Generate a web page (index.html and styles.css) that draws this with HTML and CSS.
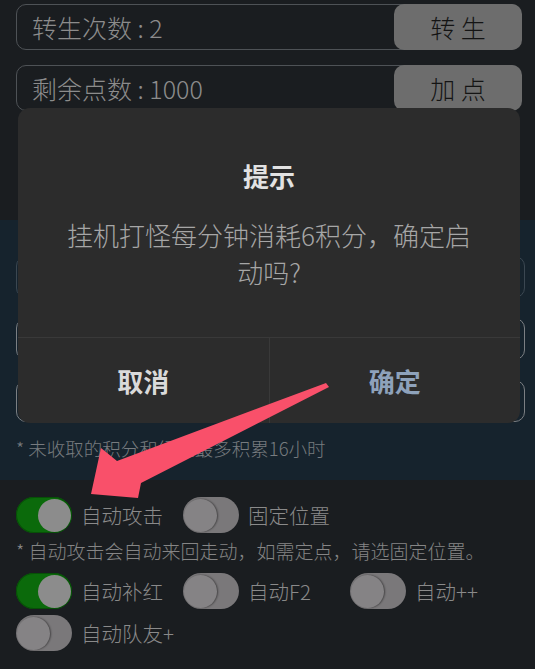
FILE: index.html
```html
<!DOCTYPE html>
<html lang="zh-CN">
<head>
  <meta charset="UTF-8">
  <meta name="viewport" content="width=device-width, initial-scale=1.0">
  <title>挂机设置</title>
  <link rel="stylesheet" href="styles.css">
</head>
<body>

  <!-- 转生 / 加点 -->
  <div class="top">
    <div class="field">
      <span class="field-text">转生次数 : 2</span>
      <button class="field-btn">转 生</button>
    </div>
    <div class="field">
      <span class="field-text">剩余点数 : 1000</span>
      <button class="field-btn">加 点</button>
    </div>
  </div>

  <div class="stats"></div>

  <!-- 积分区 -->
  <div class="band">
    <div class="band-row"></div>
    <div class="band-row light"></div>
    <div class="band-row light"></div>
    <p class="foot">* 未收取的积分和经验最多积累16小时</p>
  </div>

  <!-- 开关 -->
  <div class="opts">
    <div class="switch-row">
      <label class="opt"><span class="switch on"></span>自动攻击</label>
      <label class="opt"><span class="switch"></span>固定位置</label>
    </div>
    <p class="note">* 自动攻击会自动来回走动，如需定点，请选固定位置。</p>
    <div class="switch-row">
      <label class="opt"><span class="switch on"></span>自动补红</label>
      <label class="opt"><span class="switch"></span>自动F2</label>
      <label class="opt"><span class="switch"></span>自动++</label>
      <label class="opt"><span class="switch"></span>自动队友+</label>
    </div>
  </div>

  <!-- 提示框 -->
  <div class="dialog">
    <div class="dialog-title">提示</div>
    <div class="dialog-msg">挂机打怪每分钟消耗6积分，确定启动吗?</div>
    <div class="dialog-foot">
      <button class="dialog-btn">取消</button>
      <button class="dialog-btn ok">确定</button>
    </div>
  </div>

  <!-- 标注箭头 -->
  <svg class="arrow" width="535" height="669" viewBox="0 0 535 669">
    <polygon points="91,494 101,448 117,461 326,383 329,387 141,483 138,498" fill="#f9506a"/>
  </svg>

</body>
</html>
```

FILE: styles.css
```css
* { box-sizing: border-box; margin: 0; padding: 0; }

body {
  font-family: "Noto Sans CJK SC", "Noto Sans", sans-serif;
  font-weight: 300;
  background: #1a1d20;
  color: #8a8a8a;
  width: 535px;
  height: 669px;
  overflow: hidden;
  position: relative;
}

button { font-family: inherit; font-weight: inherit; border: none; background: none; }

/* — TOP FIELDS ————————————— */
.top {
  padding: 4px 14px 0 16px;
  display: flex;
  flex-direction: column;
  gap: 15px;
}
.field {
  height: 46px;
  border: 1.5px solid #4e5256;
  border-radius: 10px;
  display: flex;
  align-items: center;
  justify-content: space-between;
}
.field-text {
  font-size: 25px;
  padding-left: 15px;
  color: #8c8c8c;
}
.field-btn {
  align-self: stretch;
  width: 128px;
  margin: -1px -2px -1px 0;
  background: #6d6d6d;
  border-radius: 10px;
  font-size: 25px;
  color: #141414;
}

.stats { height: 109px; }

/* — BAND ————————————— */
.band {
  background: #16232d;
  height: 260px;
  padding: 36px 10px 0 16px;
}
.band-row {
  height: 42px;
  border: 1.5px solid #3b4751;
  border-radius: 10px;
  margin-bottom: 20px;
}
.band-row.light { border-color: #7b7f83; }
.foot {
  font-size: 18.5px;
  line-height: 28px;
  margin-top: -8px;
  color: #777b7f;
}

/* — SWITCHES ————————————— */
.opts { padding: 17px 16px 0; }
.switch-row {
  display: flex;
  flex-wrap: wrap;
  row-gap: 6px;
}
.opt {
  width: 167px;
  height: 36px;
  display: flex;
  align-items: center;
  gap: 9px;
  font-size: 20.5px;
  color: #8a8a8a;
}
.switch {
  position: relative;
  width: 56px;
  height: 36px;
  border-radius: 18px;
  background: #7a787a;
  flex: none;
}
.switch::after {
  content: "";
  position: absolute;
  top: 1.5px;
  left: 1px;
  width: 33px;
  height: 33px;
  border-radius: 50%;
  background: #858385;
  box-shadow: 1px 0 2px rgba(0,0,0,0.45);
}
.switch.on {
  background: #0b6a0b;
  box-shadow: inset 0 0 0 1px #075007;
}
.switch.on::after {
  left: auto;
  right: 1px;
  background: #8c8c8c;
  box-shadow: none;
}
.note {
  font-size: 19px;
  line-height: 26px;
  margin: 5px 0 9px;
  color: #858585;
}

/* — DIALOG ————————————— */
.dialog {
  position: absolute;
  top: 108px;
  left: 18px;
  width: 502px;
  height: 315px;
  background: #2c2c2c;
  border-radius: 12px;
  display: flex;
  flex-direction: column;
}
.dialog-title {
  padding-top: 50px;
  text-align: center;
  font-size: 26px;
  font-weight: bold;
  line-height: 36px;
  color: #e2e2e2;
}
.dialog-msg {
  margin-top: 22px;
  padding: 0 40px;
  text-align: center;
  font-size: 26px;
  line-height: 37px;
  color: #a6a6a6;
  flex: 1;
}
.dialog-foot {
  height: 86px;
  border-top: 1px solid #393939;
  display: flex;
}
.dialog-btn {
  flex: 1;
  font-size: 26px;
  font-weight: bold;
  color: #dadada;
}
.dialog-btn.ok {
  border-left: 1px solid #393939;
  color: #8ea2bb;
}

.arrow {
  position: absolute;
  top: 0;
  left: 0;
  pointer-events: none;
}
```
